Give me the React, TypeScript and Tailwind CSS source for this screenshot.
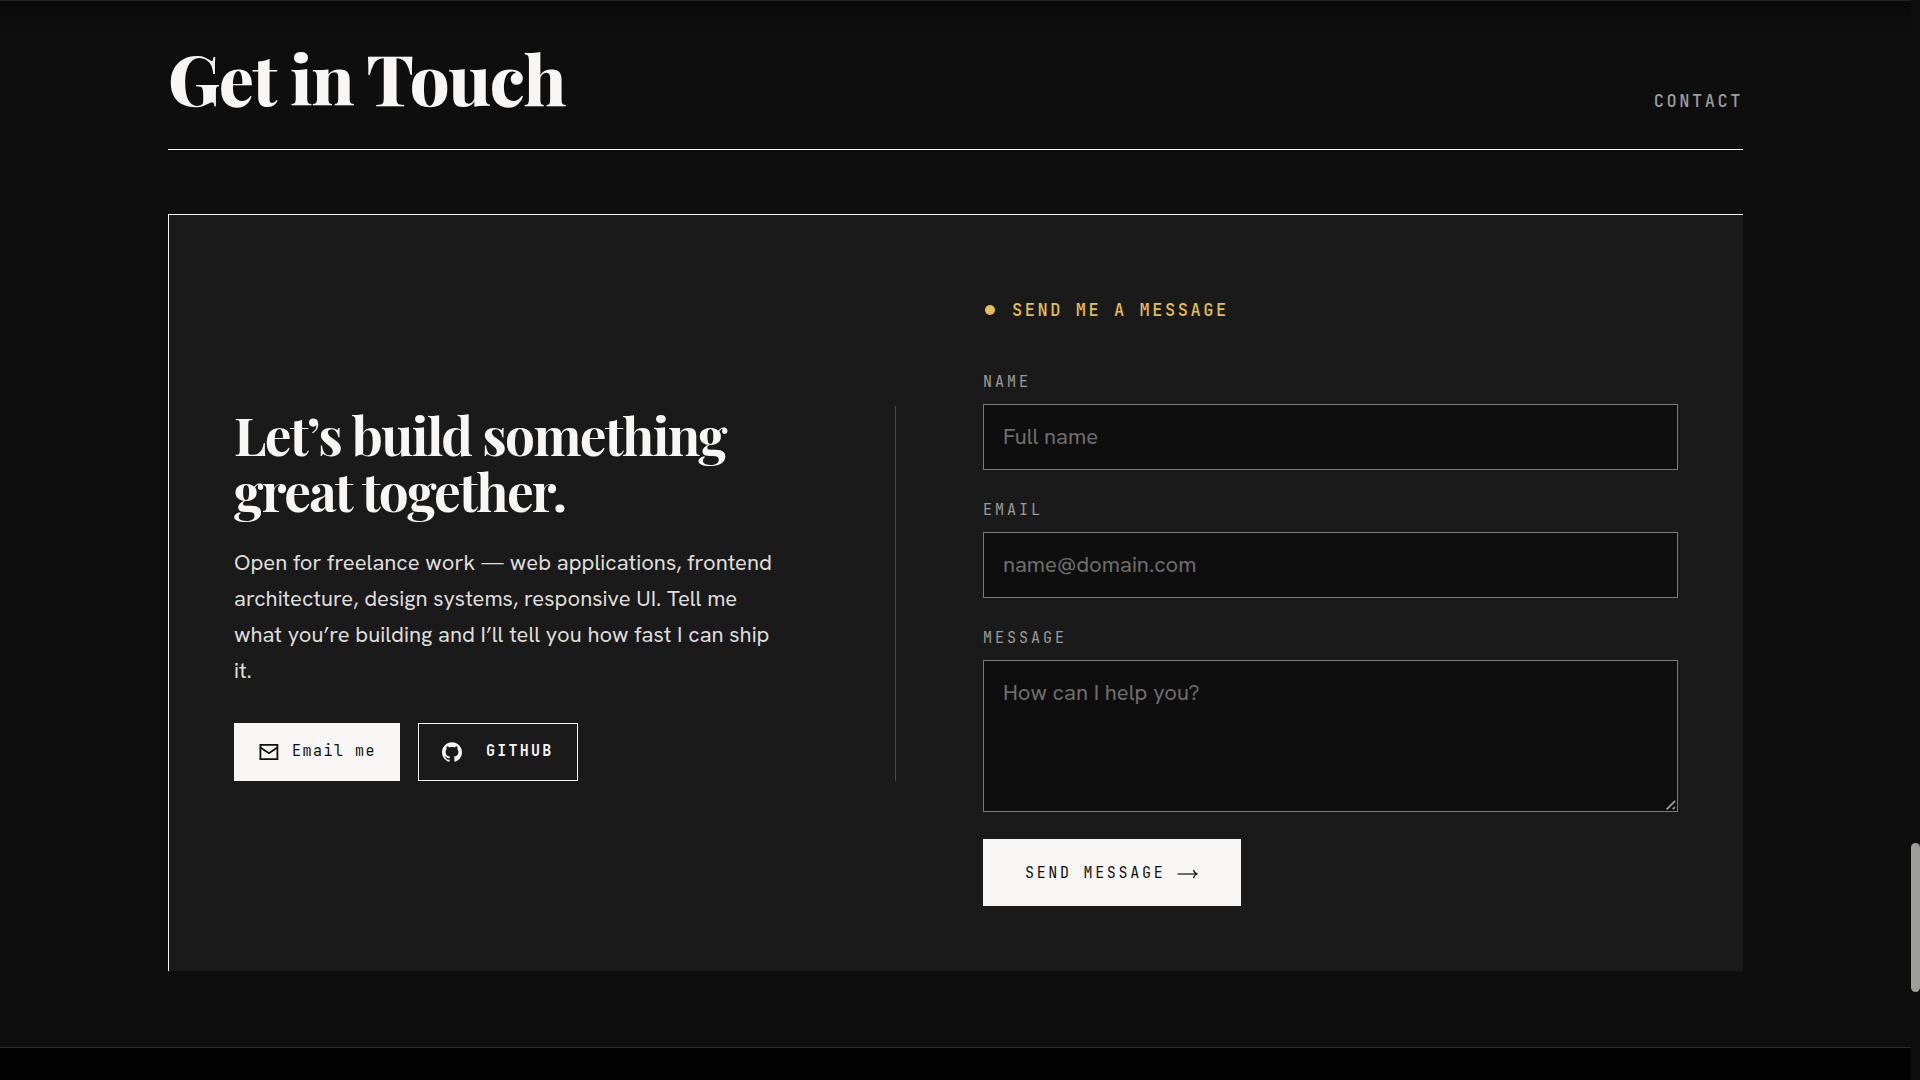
import React, { useState } from 'react';
import { SiGithub } from 'react-icons/si';

const SERIF = "font-['Playfair_Display','Liberation_Serif',serif]";
const SANS = "font-['Hanken_Grotesk',Roboto,sans-serif]";
const MONO = "font-['JetBrains_Mono','DejaVu_Sans_Mono',monospace]";

const MailIcon: React.FC = () => (
  <svg className="h-[22px] w-[22px]" viewBox="0 0 22 22" fill="none" stroke="currentColor" strokeWidth="1.8" aria-hidden="true">
    <path d="M2.4 3.9h17v14.2h-17z" />
    <path d="M2.4 6.4l8.5 5.8 8.5-5.8" />
  </svg>
);

const ArrowIcon: React.FC = () => (
  <svg className="h-3 w-[22px]" viewBox="0 0 22 12" fill="none" stroke="currentColor" strokeWidth="1.2" aria-hidden="true">
    <path d="M0.5 6H20" />
    <path d="M16.5 2Q17.5 5.5 20.5 6Q17.5 6.5 16.5 10" />
  </svg>
);

interface FieldProps {
  id: string;
  label: string;
  children: React.ReactNode;
}

const Field: React.FC<FieldProps> = ({ id, label, children }) => (
  <div className="flex flex-col gap-[10px]">
    <label htmlFor={id} className={`${MONO} pt-0.5 text-[15px] leading-[23px] tracking-[0.2em] uppercase text-[#9e9d99]`}>
      {label}
    </label>
    {children}
  </div>
);

const fieldClass = `${SANS} block w-full border border-[#7c7b78] bg-[#0e0e0e] px-[19px] text-[22px] text-[#f7f6f4] placeholder:text-[#6f6e6c] focus:outline-none focus:border-[#e3bf5c]`;

const ContactForm: React.FC = () => {
  const [form, setForm] = useState({ name: '', email: '', message: '' });

  const update = (e: React.ChangeEvent<HTMLInputElement | HTMLTextAreaElement>) => {
    setForm({ ...form, [e.target.name]: e.target.value });
  };

  return (
    <form onSubmit={(e) => e.preventDefault()} className="flex flex-col items-stretch gap-[27px]">
      <h3 className={`${MONO} mt-4 mb-[18px] flex items-center gap-[17px] text-[17px] leading-7 font-medium tracking-[0.15em] uppercase text-[#e3bf5c]`}>
        <span className="ml-0.5 h-2.5 w-2.5 rounded-full bg-[#e3bf5c]" />
        Send me a message
      </h3>
      <Field id="name" label="Name">
        <input id="name" name="name" type="text" placeholder="Full name" value={form.name} onChange={update} className={`${fieldClass} h-[66px] pb-0.5`} />
      </Field>
      <Field id="email" label="Email">
        <input id="email" name="email" type="email" placeholder="name@domain.com" value={form.email} onChange={update} className={`${fieldClass} h-[66px] pb-0.5`} />
      </Field>
      <Field id="message" label="Message">
        <div className="relative">
          <textarea id="message" name="message" placeholder="How can I help you?" value={form.message} onChange={update} className={`${fieldClass} h-[152px] resize-y py-4 leading-8 [&::-webkit-resizer]:bg-transparent`} />
          {/* resize grip */}
          <svg className="pointer-events-none absolute right-0.5 bottom-0.5 h-2.5 w-2.5" viewBox="0 0 10 10" stroke="#9e9d99" strokeWidth="1.8" aria-hidden="true">
            <path d="M0.6 9.4L9.2 0.8M6.8 9.2L8.8 7.2" />
          </svg>
        </div>
      </Field>
      <button type="submit" className={`${MONO} flex h-[67px] items-center gap-3 self-start bg-[#f7f6f4] px-[42px] pt-0.5 text-[15px] tracking-[0.18em] uppercase text-[#0e0e0e]`}>
        Send message
        <ArrowIcon />
      </button>
    </form>
  );
};

export default function App() {
  return (
    <div className="relative flex min-h-screen flex-col bg-[#0e0e0e] pr-[9px] text-[#f7f6f4]">
      <section id="contact" className="border-t border-[#222222] bg-[linear-gradient(#0a0a0a,#0e0e0e_32px)] px-[168px] pb-[76px]">
        <header className="flex items-end justify-between border-b border-[#f7f6f4] pt-[37px] pb-[33px]">
          <h1 className={`${SERIF} text-[70px] leading-[78px] font-extrabold tracking-[-0.02em]`}>Get in Touch</h1>
          <p className={`${MONO} text-[17px] leading-[30px] font-medium tracking-[0.15em] uppercase text-[#9e9d99]`}>Contact</p>
        </header>

        <div className="mt-16 grid grid-cols-[1fr_1.05fr] items-center gap-[87px] border-t border-l border-[#f7f6f4] bg-[#1a1a1a] p-[65px]">
          <div className="border-r border-[#4a4a48]">
            <h2 className={`${SERIF} text-[53px] leading-14 font-bold tracking-[-0.03em]`}>
              Let’s build something
              <br />
              great together.
            </h2>
            <p className={`${SANS} mt-[27px] max-w-[550px] text-[22px] leading-9 text-[#deddda]`}>
              Open for freelance work — web applications, frontend architecture, design systems, responsive UI. Tell me what you’re building and I’ll tell you how fast I can ship it.
            </p>
            <div className="mt-[34px] flex gap-[18px]">
              <a href="#email" className={`${MONO} flex h-[58px] items-center gap-3 border border-[#f7f6f4] bg-[#f7f6f4] px-[23px] text-[15px] tracking-[0.1em] text-[#0e0e0e]`}>
                <MailIcon />
                Email me
              </a>
              <a href="#github" className={`${MONO} flex h-[58px] items-center gap-6 border border-[#f7f6f4] px-[23px] text-[15px] font-bold tracking-[0.15em] uppercase`}>
                <SiGithub className="h-5 w-5" />
                Github
              </a>
            </div>
          </div>

          <ContactForm />
        </div>
      </section>

      <footer className="grow border-t border-[#2c2c2c] bg-[#030303]" />

      <div className="fixed top-[843px] right-0 h-[149px] w-[9px] rounded-full bg-[#9e9d99]" />
    </div>
  );
}
